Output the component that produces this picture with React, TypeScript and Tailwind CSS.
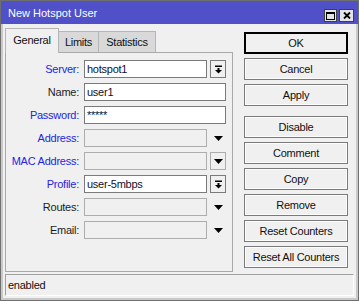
import React from 'react';

const font = { fontFamily: '"Liberation Sans", Arial, sans-serif' };

type Row = {
  label: string;
  blue?: boolean;
  value?: string;
  kind: 'text' | 'select' | 'arrow' | 'arrowBox';
  disabled?: boolean;
};

const rows: Row[] = [
  { label: 'Server:', blue: true, value: 'hotspot1', kind: 'select' },
  { label: 'Name:', value: 'user1', kind: 'text' },
  { label: 'Password:', blue: true, value: '*****', kind: 'text' },
  { label: 'Address:', blue: true, kind: 'arrow', disabled: true },
  { label: 'MAC Address:', blue: true, kind: 'arrowBox', disabled: true },
  { label: 'Profile:', blue: true, value: 'user-5mbps', kind: 'select' },
  { label: 'Routes:', kind: 'arrow', disabled: true },
  { label: 'Email:', kind: 'arrow', disabled: true },
];

const buttons = ['Cancel', 'Apply', 'Disable', 'Comment', 'Copy', 'Remove', 'Reset Counters', 'Reset All Counters'];

const DropIcon = () => (
  <svg width="9" height="9" viewBox="0 0 9 9">
    <rect x="1" y="0.5" width="7" height="1.5" fill="#000" />
    <rect x="3.5" y="3" width="2" height="2" fill="#000" />
    <polygon points="1,5 8,5 4.5,8.5" fill="#000" />
  </svg>
);

const Arrow = () => (
  <svg width="9" height="5" viewBox="0 0 9 5">
    <polygon points="0,0 9,0 4.5,5" fill="#000" />
  </svg>
);

const FormRow: React.FC<{ row: Row }> = ({ row }) => {
  const box = row.disabled
    ? 'border-[#adadad] bg-[#f0f0f0]'
    : 'border-[#7a7a7a] bg-white';
  const full = row.kind === 'text';
  return (
    <div className="flex items-center h-[18px]">
      <span
        className={`w-[74px] text-right pr-[1px] ${row.blue ? 'text-[#2424e0]' : 'text-[#1b1b1b]'}`}
      >
        {row.label}
      </span>
      <div
        className={`ml-[4px] h-[18px] border ${box} flex items-center pl-[2px] text-[#101028] ${full ? 'w-[142px]' : 'w-[123px]'}`}
      >
        {row.value}
      </div>
      {row.kind === 'select' && (
        <div className="ml-[3px] w-[16px] h-[18px] border border-[#7a7a7a] bg-[#f0f0f0] flex items-center justify-center">
          <DropIcon />
        </div>
      )}
      {row.kind === 'arrowBox' && (
        <div className="ml-[3px] w-[16px] h-[18px] border border-[#adadad] bg-[#f0f0f0] flex items-center justify-center">
          <Arrow />
        </div>
      )}
      {row.kind === 'arrow' && (
        <div className="ml-[3px] w-[16px] h-[18px] flex items-center justify-center">
          <Arrow />
        </div>
      )}
    </div>
  );
};

export default function App() {
  return (
    <div
      className="w-[359px] h-[301px] border border-[#6f6f6f] bg-[#c9c9c9] flex flex-col text-[11px] tracking-[-0.25px] overflow-hidden"
      style={font}
    >
      <div className="h-[23px] shrink-0 bg-[#5050c8] flex items-end justify-between pl-[7px] pr-[4px] pb-[2px]">
        <span className="text-white text-[11px] tracking-normal leading-[13px] mb-[2px]">New Hotspot User</span>
        <div className="flex gap-[2px]">
          <div className="w-[13px] h-[13px] border border-[#404040] bg-[#e4e4e4] flex items-center justify-center">
            <div className="w-[9px] h-[8px] border border-black border-t-2" />
          </div>
          <div className="w-[15px] h-[13px] border border-[#404040] bg-[#e4e4e4] flex items-center justify-center">
            <svg width="8" height="7" viewBox="0 0 8 7">
              <path d="M1 0.5 L7 6.5 M7 0.5 L1 6.5" stroke="#000" strokeWidth="1.8" />
            </svg>
          </div>
        </div>
      </div>

      <div className="flex-1 mx-[2px] mb-[2px] bg-[#f0f0f0] flex flex-col">
        <div className="flex pl-[2px] pt-[4px]">
          <div className="w-[228px] flex flex-col">
            <div className="flex items-end h-[24px]">
              <div className="relative z-10 w-[54px] h-[25px] -mb-[1px] border border-b-0 border-[#b5b5b5] bg-[#f0f0f0] flex items-center justify-center pb-[1px] text-[#111]">
                General
              </div>
              <div className="w-[40px] h-[21px] border border-b-0 border-l-0 border-[#b5b5b5] bg-[#d9d9d9] flex items-center justify-center text-[#111]">
                Limits
              </div>
              <div className="w-[57px] h-[21px] border border-b-0 border-l-0 border-[#b5b5b5] bg-[#d9d9d9] flex items-center justify-center text-[#111]">
                Statistics
              </div>
            </div>
            <div className="h-[220px] border border-[#a9a9a9] flex flex-col gap-[5px] pt-[7px]">
              {rows.map((r) => (
                <FormRow key={r.label} row={r} />
              ))}
            </div>
          </div>

          <div className="ml-[11px] w-[104px] flex flex-col gap-[4px] pt-[4px]">
            <div className="h-[22px] border-2 border-black bg-[#f0f0f0] flex items-center justify-center text-[#111]">
              OK
            </div>
            {buttons.map((b) => (
              <div
                key={b}
                className={`h-[22px] border border-[#7a7a7a] bg-[#f0f0f0] shadow-[inset_0_0_0_1px_#fdfdfd] flex items-center justify-center text-[#111] ${b === 'Disable' ? 'mt-[6px]' : ''}`}
              >
                {b}
              </div>
            ))}
          </div>
        </div>

        <div className="mt-[2px] mx-[2px] h-[22px] border-t border-l border-[#a0a0a0] border-r border-b border-r-white border-b-white flex items-center pl-[2px] text-[#111]">
          enabled
        </div>
      </div>
    </div>
  );
}
